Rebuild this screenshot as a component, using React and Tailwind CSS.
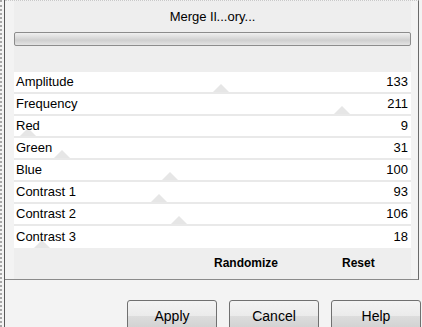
import React from "react";

const params = [
  { name: "Amplitude", value: 133 },
  { name: "Frequency", value: 211 },
  { name: "Red", value: 9 },
  { name: "Green", value: 31 },
  { name: "Blue", value: 100 },
  { name: "Contrast 1", value: 93 },
  { name: "Contrast 2", value: 106 },
  { name: "Contrast 3", value: 18 },
];

function ParamRow({ name, value, last }) {
  // faint slider thumb sitting under the row, 0..255 across the row width
  const left = (value / 255) * 397 - 8;
  return (
    <div
      className={`relative flex h-[22px] items-center justify-between bg-white pl-[2px] pr-[3px] ${
        last ? "" : "border-b-2 border-[#e9e9e9]"
      }`}
    >
      <svg
        className="absolute bottom-0"
        style={{ left }}
        width="16"
        height="8"
        viewBox="0 0 16 8"
      >
        <polygon points="8,0 16,8 0,8" fill="#e6e6e6" />
      </svg>
      <span className="relative">{name}</span>
      <span className="relative">{value}</span>
    </div>
  );
}

function DialogButton({ children }) {
  return (
    <button className="h-[32px] w-[90px] rounded-[3px] border border-[#707070] bg-[linear-gradient(#f3f3f3_0%,#ebebeb_50%,#dddddd_50%,#cfcfcf_100%)] text-[14px] leading-[16px] text-black">
      {children}
    </button>
  );
}

export default function App() {
  return (
    <div className="flex h-[327px] w-[422px] overflow-hidden bg-[#f3f3f3] font-['Liberation_Sans',Arial,sans-serif] text-[13px] text-black">
      <div className="w-[4px] border-l-[2px] border-dotted border-[#a8a8a8]" />
      <div className="flex w-[418px] flex-col border-l border-[#5a5a5a]">
        <div className="h-[281px] w-[414px] border-t border-dotted border-t-[#c8c8c8] border-r border-b border-r-[#6a6a6a] border-b-[#8a8a8a] [border-right-style:solid] [border-bottom-style:solid]">
          <div className="ml-[9px] flex h-[278px] w-[397px] flex-col bg-[#eeeeee]">
            <div className="pt-[8px] text-center leading-[16px]">Merge Il...ory...</div>
            <div className="mt-[7px] h-[14px] rounded-[2px] border border-[#8c8c8c] bg-[linear-gradient(#f0f0f0,#d8d8d8_45%,#cfcfcf_60%,#e4e4e4)]" />
            <div className="mt-[26px] flex flex-col">
              {params.map((p, i) => (
                <ParamRow key={p.name} name={p.name} value={p.value} last={i === params.length - 1} />
              ))}
            </div>
            <div className="flex h-[30px] items-center text-[12px] font-bold">
              <span className="ml-[200px]">Randomize</span>
              <span className="ml-[64px]">Reset</span>
            </div>
          </div>
        </div>
        <div className="mt-[20px] flex gap-[12px] pl-[122px]">
          <DialogButton>Apply</DialogButton>
          <DialogButton>Cancel</DialogButton>
          <DialogButton>Help</DialogButton>
        </div>
      </div>
    </div>
  );
}
